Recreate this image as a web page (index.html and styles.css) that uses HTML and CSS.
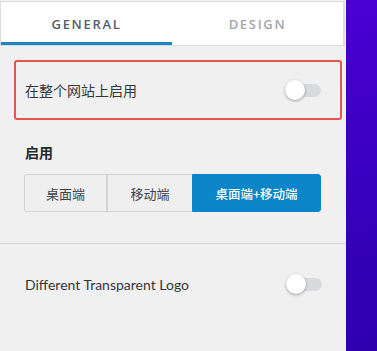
FILE: index.html
```html
<!DOCTYPE html>
<html>
<head>
<meta charset="utf-8">
<link rel="stylesheet" href="styles.css">
</head>
<body>
<div class="page">
  <div class="panel">
    <div class="tabs">
      <div class="tab active">GENERAL</div>
      <div class="tab">DESIGN</div>
    </div>
    <div class="highlight">
      <span class="label">在整个网站上启用</span>
      <span class="toggle"><span class="knob"></span></span>
    </div>
    <div class="section-title">启用</div>
    <div class="btn-group">
      <div class="btn b1">桌面端</div>
      <div class="btn b2">移动端</div>
      <div class="btn b3 selected">桌面端+移动端</div>
    </div>
    <div class="divider"></div>
    <div class="row">
      <span class="label en">Different Transparent Logo</span>
      <span class="toggle"><span class="knob"></span></span>
    </div>
  </div>
  <div class="side"></div>
</div>
</body>
</html>
```
FILE: styles.css
```css
html, body {
  margin: 0;
  padding: 0;
  height: 100%;
}
body {
  background: #f0f0f0;
  font-family: "Noto Sans CJK SC", "Noto Sans", sans-serif;
  color: #32373c;
  overflow: hidden;
}
.page {
  display: flex;
  height: 351px;
}
.panel {
  width: 346px;
  flex: none;
  padding-top: 1px;
  background: #f0f0f0;
}
.side {
  flex: 1;
  background: linear-gradient(170deg, #4a00d2 0%, #3a00c0 50%, #2e00ad 100%);
}
.tabs {
  display: flex;
  height: 43px;
  background: #fff;
  border: 1px solid #dcdcdc;
  border-right: 2px solid #dcdcdc;
  margin-right: 1px;
}
.tab {
  flex: 1;
  display: flex;
  align-items: center;
  justify-content: center;
  font-family: "Open Sans", sans-serif;
  font-size: 13px;
  font-weight: 600;
  letter-spacing: 1.7px;
  color: #a2a7ad;
  box-sizing: border-box;
  padding-top: 1px;
}
.tab.active {
  color: #555d66;
  border-bottom: 3px solid #1a84c3;
  padding-top: 4px;
}
.highlight {
  margin: 14px 4px 0 14px;
  height: 56px;
  border: 2px solid #e2574c;
  border-radius: 3px;
  display: flex;
  align-items: center;
  justify-content: space-between;
  padding: 0 19px 0 9px;
}
.label {
  font-size: 14px;
  color: #32373c;
}
.label.en {
  font-family: "Lato", sans-serif;
  font-size: 14px;
}
.toggle {
  position: relative;
  width: 36px;
  height: 13px;
  border-radius: 7px;
  background: #d9dadd;
  display: inline-block;
}
.knob {
  position: absolute;
  left: 0;
  top: -4px;
  width: 20px;
  height: 20px;
  border-radius: 50%;
  background: #fff;
  box-shadow: 0 1px 3px rgba(0, 0, 0, 0.35);
}
.section-title {
  margin: 22px 0 0 25px;
  font-size: 14px;
  font-weight: 700;
  line-height: 20px;
  color: #23282d;
}
.btn-group {
  display: flex;
  margin: 12px 0 0 24px;
  width: 297px;
  height: 38px;
}
.btn {
  display: flex;
  align-items: center;
  justify-content: center;
  font-size: 13px;
  color: #3c434a;
  border: 1px solid #d3d3d3;
  box-sizing: border-box;
  background: #efefef;
}
.b1 {
  width: 84px;
  border-radius: 3px 0 0 3px;
  border-right: 2px solid #d3d3d3;
}
.b2 {
  width: 84px;
  border-left: none;
  border-right: none;
}
.b3 {
  flex: 1;
  border-radius: 0 3px 3px 0;
}
.btn.selected {
  background: #0a85c7;
  border-color: #0a85c7;
  color: #fff;
  font-weight: 500;
  font-size: 12.5px;
}
.divider {
  margin-top: 31px;
  height: 1px;
  background: #d6d6d6;
}
.row {
  display: flex;
  align-items: center;
  justify-content: space-between;
  padding: 30px 24px 0 25px;
  height: 20px;
}
```
